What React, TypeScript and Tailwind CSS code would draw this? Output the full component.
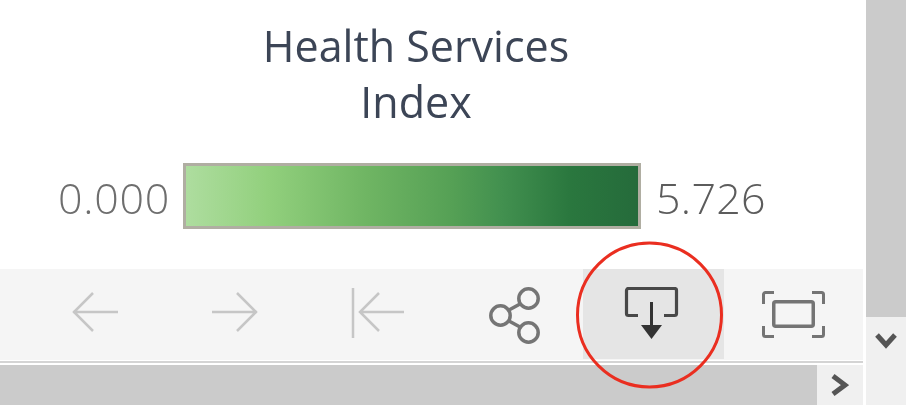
import React from "react";

const icon = "block";

export default function App() {
  return (
    <div className="relative w-[910px] h-[408px] bg-white overflow-hidden font-['Open_Sans',sans-serif]">
      <div className="flex blur-[0.7px]">
        <div className="w-[863px] flex flex-col">
          <div className="h-[269px] flex flex-col">
            <div className="pt-[18px] text-center text-[43px] leading-[56px] text-[#3c4556] w-[832px]">
              Health Services
              <br />
              Index
            </div>
            <div className="mt-[33px] flex items-center">
              <div className="w-[170px] pt-[4px] text-right text-[43px] tracking-[0.7px] leading-[50px] text-[#6e6e6e] font-light">0.000</div>
              <div className="ml-[13px] w-[458px] h-[66px] border-[3px] border-[#b0aea2] bg-[linear-gradient(to_right,#aedd9f,#92d07d_18%,#6fb563_40%,#55a055_59%,#42904f_70%,#2a773e_85%,#256b3b)]" />
              <div className="ml-[15px] pt-[4px] text-[43px] tracking-[0.3px] leading-[50px] text-[#5c5c5c] font-light">5.726</div>
            </div>
          </div>
          <div className="h-[91px] bg-[#f5f5f5] relative">
            <div className="absolute left-[72px] top-[23px]">
              <svg width="46" height="40" viewBox="0 0 46 40" fill="none" stroke="#c6c6c6" strokeWidth="2.5" className={icon}><path d="M1 20H46M21 1 2 20l19 19" /></svg>
            </div>
            <div className="absolute left-[212px] top-[23px]">
              <svg width="46" height="40" viewBox="0 0 46 40" fill="none" stroke="#c6c6c6" strokeWidth="2.5" className={icon}><path d="M0 20H45M25 1l19 19-19 19" /></svg>
            </div>
            <div className="absolute left-[351px] top-[17px]">
              <svg width="54" height="52" viewBox="0 0 54 52" fill="none" stroke="#c6c6c6" strokeWidth="2.5" className={icon}><path d="M2 2V52M9 26H53M28 7 9 26l19 19" /></svg>
            </div>
            <div className="absolute left-[489px] top-[18px]">
              <svg width="52" height="58" viewBox="0 0 52 58" fill="none" stroke="#757575" strokeWidth="3.500" className={icon}>
                <circle cx="39.500" cy="11.500" r="9.700" /><circle cx="11.500" cy="28.500" r="9.700" /><circle cx="39.500" cy="45.500" r="9.700" />
                <path d="M20 23 31 17M20 34 31 40" />
              </svg>
            </div>
            <div className="absolute left-[583px] top-0 w-[141px] h-[90px] bg-[#e5e5e5]">
              <svg width="56" height="54" viewBox="0 0 56 54" fill="none" className="block mt-[18px] ml-[41px]">
                <path d="M14 28.500H4.500a2 2 0 0 1-2-2V3.500a2 2 0 0 1 2-2h46a2 2 0 0 1 2 2v23a2 2 0 0 1-2 2H40" stroke="#484848" strokeWidth="3.200" />
                <path d="M27.500 15V39" stroke="#333" strokeWidth="3" />
                <path d="M17 38H38L27.500 52Z" fill="#333" />
              </svg>
            </div>
            <div className="absolute left-[761px] top-[21px]">
              <svg width="66" height="50" viewBox="0 0 66 50" fill="none" stroke="#747474" strokeWidth="3" className={icon}>
                <path d="M2.500 14V4.500a2 2 0 0 1 2-2H13M51 2.500h9.500a2 2 0 0 1 2 2V14M62.500 36v8.500a2 2 0 0 1-2 2H51M13 46.500H4.500a2 2 0 0 1-2-2V36" />
                <rect x="12.750" y="11.750" width="39.500" height="24.500" rx="2" strokeWidth="3.500" />
              </svg>
            </div>
          </div>
          <div className="h-[2px] bg-[#d4d4d4] mt-[1px]" />
          <div className="h-[2px]" />
          <div className="h-[40px] flex">
            <div className="w-[817px] bg-[#cbcbcb]" />
            <div className="flex-1 bg-[#f0f0f0] flex items-center justify-center">
              <svg width="18" height="22" viewBox="0 0 18 22" fill="none" stroke="#555" strokeWidth="5" className={icon}><path d="M2 2l12 9-12 9" /></svg>
            </div>
          </div>
        </div>
        <div className="w-[3px]" />
        <div className="w-[40px] h-[405px] flex flex-col">
          <div className="h-[317px] bg-[#cbcbcb]" />
          <div className="flex-1 bg-[#f0f0f0] flex justify-center pt-[15px]">
            <svg width="22" height="18" viewBox="0 0 22 18" fill="none" stroke="#555" strokeWidth="5" className={icon}><path d="M2 3l9 10 9-10" /></svg>
          </div>
        </div>
      </div>
      <svg width="148" height="148" viewBox="0 0 148 148" fill="none" className="absolute left-[575px] top-[241px] pointer-events-none">
        <circle cx="74.500" cy="74" r="72" stroke="#ea2e20" strokeWidth="3" />
      </svg>
    </div>
  );
}
